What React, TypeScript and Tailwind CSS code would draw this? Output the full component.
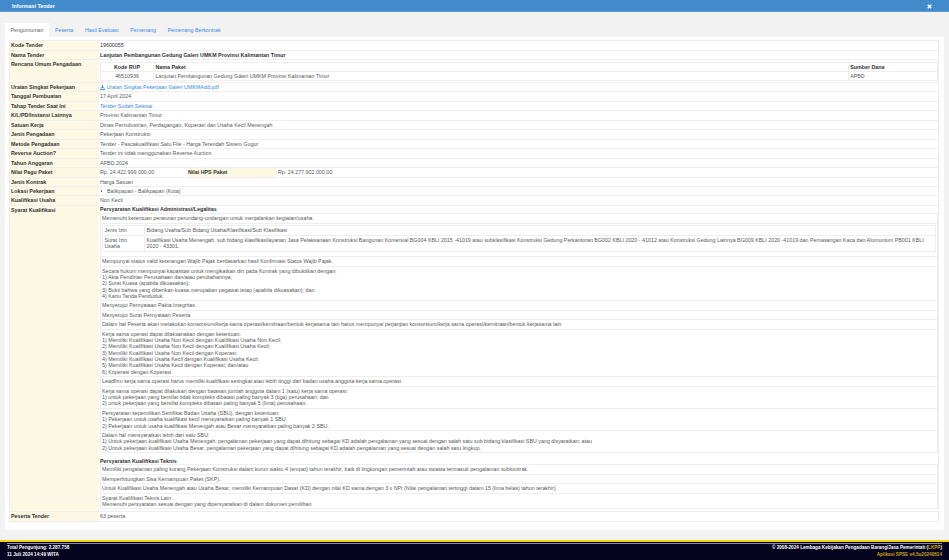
import type { ReactNode } from "react";

const tabs = ["Peserta", "Hasil Evaluasi", "Pemenang", "Pemenang Berkontrak"];

function Row({ label, children }: { label: string; children: ReactNode }) {
  return (
    <div className="flex border-b border-[#eeeeee]">
      <div className="w-[88.5px] shrink-0 bg-[#fcf8e3] px-[1px] py-[1px] font-bold text-[#333333]">{label}</div>
      <div className="min-w-0 flex-1 py-[1px] pl-[1.5px]">{children}</div>
    </div>
  );
}

function Cell({ lines }: { lines: string[] }) {
  return (
    <div className="border-b border-[#eeeeee] px-[1px] py-[1.05px]">
      {lines.map((l) => (
        <div key={l}>{l}</div>
      ))}
    </div>
  );
}

const adminTop = [
  ["Mempunyai status valid keterangan Wajib Pajak berdasarkan hasil Konfirmasi Status Wajib Pajak."],
  [
    "Secara hukum mempunyai kapasitas untuk mengikatkan diri pada Kontrak yang dibuktikan dengan:",
    "1) Akta Pendirian Perusahaan dan/atau perubahannya;",
    "2) Surat Kuasa (apabila dikuasakan);",
    "3) Bukti bahwa yang diberikan kuasa merupakan pegawai tetap (apabila dikuasakan); dan",
    "4) Kartu Tanda Penduduk.",
  ],
  ["Menyetujui Pernyataan Pakta Integritas."],
  ["Menyetujui Surat Pernyataan Peserta"],
  ["Dalam hal Peserta akan melakukan konsorsium/kerja sama operasi/kemitraan/bentuk kerjasama lain harus mempunyai perjanjian konsorsium/kerja sama operasi/kemitraan/bentuk kerjasama lain"],
  [
    "Kerja sama operasi dapat dilaksanakan dengan ketentuan:",
    "1) Memiliki Kualifikasi Usaha Non Kecil dengan Kualifikasi Usaha Non Kecil;",
    "2) Memiliki Kualifikasi Usaha Non Kecil dengan Kualifikasi Usaha Kecil;",
    "3) Memiliki Kualifikasi Usaha Non Kecil dengan Koperasi;",
    "4) Memiliki Kualifikasi Usaha Kecil dengan Kualifikasi Usaha Kecil;",
    "5) Memiliki Kualifikasi Usaha Kecil dengan Koperasi; dan/atau",
    "6) Koperasi dengan Koperasi.",
  ],
  ["Leadfirm kerja sama operasi harus memiliki kualifikasi setingkat atau lebih tinggi dari badan usaha anggota kerja sama operasi."],
  [
    "Kerja sama operasi dapat dilakukan dengan batasan jumlah anggota dalam 1 (satu) kerja sama operasi:",
    "1) untuk pekerjaan yang bersifat tidak kompleks dibatasi paling banyak 3 (tiga) perusahaan; dan",
    "2) untuk pekerjaan yang bersifat kompleks dibatasi paling banyak 5 (lima) perusahaan.",
  ],
  [
    "Persyaratan kepemilikan Sertifikat Badan Usaha (SBU), dengan ketentuan:",
    "1) Pekerjaan untuk usaha kualifikasi kecil mensyaratkan paling banyak 1 SBU;",
    "2) Pekerjaan untuk usaha kualifikasi Menengah atau Besar mensyaratkan paling banyak 2 SBU.",
  ],
  [
    "Dalam hal mensyaratkan lebih dari satu SBU:",
    "1) Untuk pekerjaan kualifikasi Usaha Menengah, pengalaman pekerjaan yang dapat dihitung sebagai KD adalah pengalaman yang sesuai dengan salah satu sub bidang klasifikasi SBU yang disyaratkan; atau",
    "2) Untuk pekerjaan kualifikasi Usaha Besar, pengalaman pekerjaan yang dapat dihitung sebagai KD adalah pengalaman yang sesuai dengan salah satu lingkup.",
  ],
];

const teknis = [
  ["Memiliki pengalaman paling kurang Pekerjaan Konstruksi dalam kurun waktu 4 (empat) tahun terakhir, baik di lingkungan pemerintah atau swasta termasuk pengalaman subkontrak."],
  ["Memperhitungkan Sisa Kemampuan Paket (SKP)."],
  ["Untuk Kualifikasi Usaha Menengah atau Usaha Besar, memiliki Kemampuan Dasar (KD) dengan nilai KD sama dengan 3 x NPt (Nilai pengalaman tertinggi dalam 15 (lima belas) tahun terakhir)"],
  ["Syarat Kualifikasi Teknis Lain", "Memenuhi persyaratan sesuai dengan yang dipersyaratkan di dalam dokumen pemilihan"],
];

export default function App() {
  return (
    <div className="flex h-[560px] w-[949px] flex-col overflow-hidden bg-[#f2f2f2] font-['Liberation_Sans',Arial,sans-serif] text-[5.33px] leading-[6.45px] text-[#5a5a5a]">
      <header className="flex h-[12px] shrink-0 items-center justify-between border-b border-[#5b9bd5] bg-[#428bca] pl-[12px] pr-[17.5px] pt-[1px] font-bold text-white">
        <span>Informasi Tender</span>
        <svg width="5" height="5" viewBox="0 0 10 10">
          <path d="M1.5 1.5 8.5 8.5M8.5 1.5 1.5 8.5" stroke="white" strokeWidth="3" />
        </svg>
      </header>

      <nav className="mt-[11px] flex h-[13.7px] shrink-0 items-center pl-[4.7px] text-[#3b8ae6]">
        <div className="flex h-full items-center bg-white px-[5.7px] text-[#666666]">Pengumuman</div>
        <div className="ml-[5.7px] flex gap-[11.7px]">
          {tabs.map((t) => (
            <span key={t}>{t}</span>
          ))}
        </div>
      </nav>

      <main className="ml-[4.5px] mr-[4.7px] h-[493.3px] shrink-0 bg-white pl-[4.5px] pr-[5.3px] pt-[3.6px]">
        <div className="border-x border-t border-[#eeeeee]">
          <Row label="Kode Tender"><span className="text-[#333333]">19600055</span></Row>
          <Row label="Nama Tender"><b className="text-[#333333]">Lanjutan Pembangunan Gedung Galeri UMKM Provinsi Kalimantan Timur</b></Row>
          <Row label="Rencana Umum Pengadaan">
            <div className="mt-[0.7px] border border-[#eeeeee]">
              <div className="flex border-b border-[#eeeeee] font-bold text-[#333333]">
                <div className="w-[53px] border-r border-[#eeeeee] py-[0.8px] text-center">Kode RUP</div>
                <div className="flex-1 py-[0.8px] pl-[1.5px]">Nama Paket</div>
                <div className="w-[89.4px] border-l border-[#eeeeee] py-[0.8px] pl-[1.5px]">Sumber Dana</div>
              </div>
              <div className="flex">
                <div className="w-[53px] border-r border-[#eeeeee] py-[0.8px] text-center">46510936</div>
                <div className="flex-1 py-[0.8px] pl-[1.5px]">Lanjutan Pembangunan Gedung Galeri UMKM Provinsi Kalimantan Timur</div>
                <div className="w-[89.4px] border-l border-[#eeeeee] py-[0.8px] pl-[1.5px]">APBD</div>
              </div>
            </div>
          </Row>
          <Row label="Uraian Singkat Pekerjaan">
            <span className="flex items-center gap-[1.5px] text-[#3b8ae6]">
              <svg width="5" height="5" viewBox="0 0 12 12" fill="#3b8ae6">
                <path d="M4.5 0h3v4.5H10L6 8.5 2 4.5h2.5zM0 9h4l2 1.5L8 9h4v3H0z" />
              </svg>
              Uraian Singkat Pekerjaan Galeri UMKMAdd.pdf
            </span>
          </Row>
          <Row label="Tanggal Pembuatan">17 April 2024</Row>
          <Row label="Tahap Tender Saat Ini"><span className="text-[#3b8ae6]">Tender Sudah Selesai</span></Row>
          <Row label="K/L/PD/Instansi Lainnya">Provinsi Kalimantan Timur</Row>
          <Row label="Satuan Kerja">Dinas Perindustrian, Perdagangan, Koperasi dan Usaha Kecil Menengah</Row>
          <Row label="Jenis Pengadaan">Pekerjaan Konstruksi</Row>
          <Row label="Metode Pengadaan">Tender - Pascakualifikasi Satu File - Harga Terendah Sistem Gugur</Row>
          <Row label="Reverse Auction?">Tender ini tidak menggunakan Reverse Auction</Row>
          <Row label="Tahun Anggaran">APBD 2024</Row>
          <div className="flex border-b border-[#eeeeee]">
            <div className="w-[88.5px] shrink-0 bg-[#fcf8e3] px-[1px] py-[1px] font-bold text-[#333333]">Nilai Pagu Paket</div>
            <div className="w-[88.2px] py-[1px] pl-[1.5px]">Rp. 24.422.999.000,00</div>
            <div className="w-[90px] bg-[#fcf8e3] px-[1.3px] py-[1px] font-bold text-[#333333]">Nilai HPS Paket</div>
            <div className="flex-1 py-[1px] pl-[1.3px]">Rp. 24.277.902.000,00</div>
          </div>
          <Row label="Jenis Kontrak">Harga Satuan</Row>
          <Row label="Lokasi Pekerjaan">
            <span className="flex items-center">
              <span className="ml-[0.5px] mr-[4.7px] size-[1.8px] rounded-full bg-[#555555]" />
              Balikpapan - Balikpapan (Kota)
            </span>
          </Row>
          <Row label="Kualifikasi Usaha">Non Kecil</Row>
          <Row label="Syarat Kualifikasi">
            <div className="h-[304px] leading-[6.35px]">
              <b className="-mt-[0.5px] block pb-[0.5px] text-[#333333]">Persyaratan Kualifikasi Administrasi/Legalitas</b>
              <div className="border-x border-t border-[#eeeeee]">
                <Cell lines={["Memenuhi ketentuan peraturan perundang-undangan untuk menjalankan kegiatan/usaha."]} />
                <div className="h-[33.5px] border-b border-[#eeeeee] px-[1px] pt-[1px]">
                  <div className="border border-[#eeeeee]">
                    <div className="flex border-b border-[#eeeeee]">
                      <div className="w-[42px] border-r border-[#eeeeee] px-[1.5px] py-[1.3px]">Jenis Izin</div>
                      <div className="flex-1 px-[1.5px] py-[1.3px]">Bidang Usaha/Sub Bidang Usaha/Klasifikasi/Sub Klasifikasi</div>
                    </div>
                    <div className="flex">
                      <div className="w-[42px] border-r border-[#eeeeee] px-[1.5px] py-[1.3px]">Surat Izin Usaha</div>
                      <div className="flex-1 px-[1.5px] py-[1.3px]">
                        Kualifikasi Usaha Menengah, sub bidang klasifikasilayanan Jasa Pelaksanaan Konstruksi Bangunan Komersial BG004 KBLI 2015 -41019 atau subklasifikasi Konstruksi Gedung Perkantoran BG002 KBLI 2020 - 41012 atau Konstruksi Gedung Lainnya BG009 KBLI 2020 -41019 dan Pemasangan Kaca dan Alumunium PB001 KBLI 2020 - 43301.
                      </div>
                    </div>
                  </div>
                </div>
                {adminTop.map((lines) => (
                  <Cell key={lines[0]} lines={lines} />
                ))}
              </div>
              <b className="mt-[4.5px] block text-[#333333]">Persyaratan Kualifikasi Teknis</b>
              <div className="mt-[0.5px] border-x border-t border-[#eeeeee]">
                {teknis.map((lines) => (
                  <Cell key={lines[0]} lines={lines} />
                ))}
              </div>
            </div>
          </Row>
          <Row label="Peserta Tender">63 peserta</Row>
        </div>
      </main>

      <footer className="mt-[10px] flex-1 border-t-2 border-[#f5d40f] bg-[#04041f] px-[7px] pt-[1px] text-[4.65px] font-bold text-white">
        <div className="flex justify-between border-t border-[#8a8a96] pt-[1.5px] leading-[6.3px]">
          <div>
            <div>Total Pengunjung: 2.287.758</div>
            <div>11 Juli 2024 14:49 WITA</div>
          </div>
          <div className="text-right">
            <div>
              © 2008-2024 Lembaga Kebijakan Pengadaan Barang/Jasa Pemerintah (<span className="text-[#d4a017]">LKPP</span>)
            </div>
            <div className="text-[#d4a017]">Aplikasi SPSE v4.5u20240614</div>
          </div>
        </div>
      </footer>
    </div>
  );
}
